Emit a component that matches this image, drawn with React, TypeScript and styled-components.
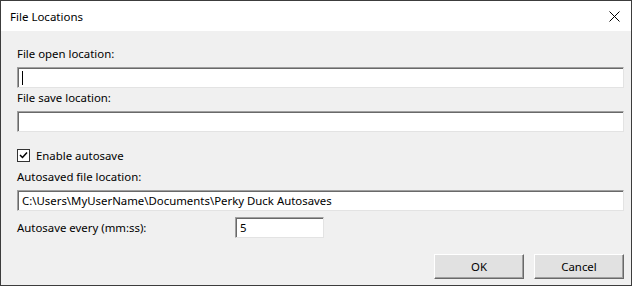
import styled, { createGlobalStyle } from "styled-components";

const GlobalStyle = createGlobalStyle`
  html, body {
    margin: 0;
    padding: 0;
    background: #ffffff;
  }
  body {
    font-family: "Noto Sans", "Open Sans", sans-serif;
    font-size: 11.4px;
    color: #000000;
  }
`;

const Window = styled.div`
  width: 632px;
  height: 286px;
  box-sizing: border-box;
  border: 1px solid #3c3c3c;
  background: #f0f0f0;
  display: flex;
  flex-direction: column;
`;

const TitleBar = styled.div`
  height: 30px;
  flex: 0 0 30px;
  background: #ffffff;
  display: flex;
  align-items: center;
  justify-content: space-between;
  padding: 0 10px 0 9px;
  font-size: 11.5px;
`;

const CloseButton = styled.div`
  width: 12px;
  height: 12px;
  display: flex;
  align-items: center;
  justify-content: center;
  margin-right: 1px;
`;

const Body = styled.div`
  flex: 1;
  display: flex;
  flex-direction: column;
  padding: 15px 7px 0 16px;
`;

const Label = styled.div<{ $gap?: number }>`
  height: 16px;
  line-height: 16px;
  margin-bottom: ${(p) => p.$gap ?? 5}px;
  white-space: nowrap;
`;

const TextBox = styled.div<{ $width?: number; $after?: number }>`
  box-sizing: border-box;
  height: 21px;
  width: ${(p) => (p.$width ? `${p.$width}px` : "100%")};
  margin-bottom: ${(p) => p.$after ?? 0}px;
  background: #ffffff;
  border-top: 1px solid #a0a0a0;
  border-left: 1px solid #a0a0a0;
  border-right: 1px solid #e3e3e3;
  border-bottom: 1px solid #e3e3e3;
  box-shadow: inset 1px 1px 0 #696969;
  display: flex;
  align-items: center;
  padding-left: 4px;
  white-space: nowrap;
  overflow: hidden;
`;

const Caret = styled.span`
  display: inline-block;
  width: 1px;
  height: 14px;
  background: #000000;
`;

const CheckRow = styled.div`
  display: flex;
  align-items: center;
  gap: 6px;
  height: 16px;
  margin-bottom: 6px;
`;

const CheckBox = styled.div`
  box-sizing: border-box;
  width: 13px;
  height: 13px;
  background: #ffffff;
  border: 1px solid #333333;
  display: flex;
  align-items: center;
  justify-content: center;
`;

const InlineRow = styled.div`
  display: flex;
  align-items: center;
  height: 23px;
`;

const InlineLabel = styled.div`
  width: 218px;
  white-space: nowrap;
`;

const ButtonRow = styled.div`
  display: flex;
  justify-content: flex-end;
  gap: 10px;
  margin-top: 15px;
`;

const Button = styled.div`
  box-sizing: border-box;
  width: 90px;
  height: 25px;
  background: #e1e1e1;
  border-top: 1px solid #ffffff;
  border-left: 1px solid #ffffff;
  border-right: 1px solid #696969;
  border-bottom: 1px solid #696969;
  box-shadow: inset -1px -1px 0 #a0a0a0;
  display: flex;
  align-items: center;
  justify-content: center;
`;

export default function App() {
  return (
    <>
      <GlobalStyle />
      <Window>
        <TitleBar>
          <span>File Locations</span>
          <CloseButton>
            <svg width="11" height="11" viewBox="0 0 11 11">
              <path d="M0.5 0.5 L10.5 10.5 M10.5 0.5 L0.5 10.5" stroke="#000" strokeWidth="1" />
            </svg>
          </CloseButton>
        </TitleBar>
        <Body>
          <Label>File open location:</Label>
          <TextBox $after={2}>
            <Caret />
          </TextBox>
          <Label>File save location:</Label>
          <TextBox $after={15} />
          <CheckRow>
            <CheckBox>
              <svg width="9" height="9" viewBox="0 0 9 9">
                <path d="M1 4 L3.5 6.5 L8 1.5" stroke="#000" strokeWidth="1.5" fill="none" />
              </svg>
            </CheckBox>
            <span>Enable autosave</span>
          </CheckRow>
          <Label>Autosaved file location:</Label>
          <TextBox $after={5}>C:\Users\MyUserName\Documents\Perky Duck Autosaves</TextBox>
          <InlineRow>
            <InlineLabel>Autosave every (mm:ss):</InlineLabel>
            <TextBox $width={89}>5</TextBox>
          </InlineRow>
          <ButtonRow>
            <Button>OK</Button>
            <Button>Cancel</Button>
          </ButtonRow>
        </Body>
      </Window>
    </>
  );
}
